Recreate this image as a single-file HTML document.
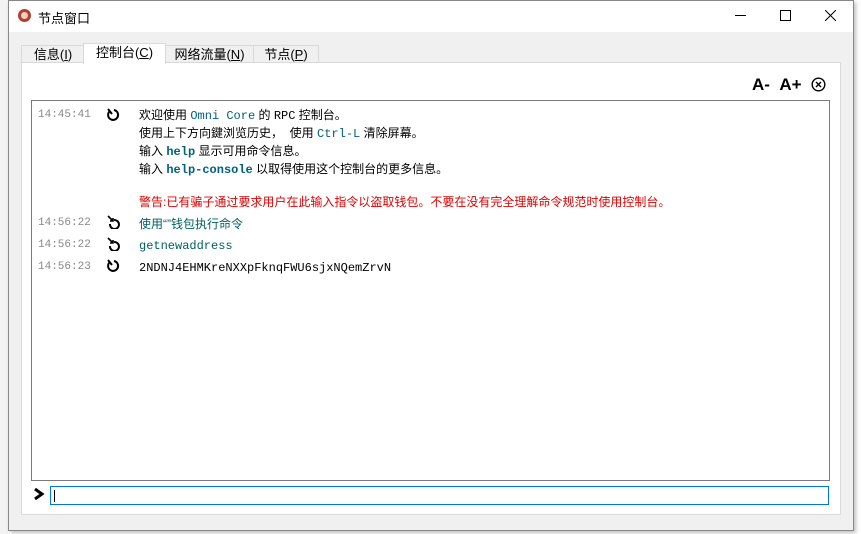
<!DOCTYPE html>
<html><head><meta charset="utf-8"><style>
body{margin:0;width:861px;height:534px;background:#fff;position:relative;overflow:hidden;font-family:"Liberation Sans","Noto Sans CJK SC",sans-serif;font-size:12px;}
.abs{position:absolute}
#bgl{left:0;top:0;width:8px;height:534px;background:#f3f3f3}
#win{left:8px;top:0;width:844px;height:529px;background:#f0f0f0;border:1px solid #888;box-shadow:2px 2px 4px rgba(0,0,0,.25)}
#title{left:0;top:0;width:844px;height:31px;background:#fff}
.tab{top:44px;height:17px;border:1px solid #d9d9d9;border-bottom:none;background:#f0f0f0;font-size:13px;line-height:17px;text-align:center;color:#000}
.tab.act{top:42px;height:20px;background:#fff;border-color:#d9d9d9;z-index:2}
#panel{left:12px;top:61px;width:818px;height:451px;background:#fff;border:1px solid #d9d9d9}
#cons{left:22px;top:99px;width:797px;height:379px;border:1px solid #7a7a7a;background:#fff}
.ts{position:absolute;left:6px;font-family:"Liberation Mono",monospace;font-size:11px;color:#888}
.ic{position:absolute;left:75px;width:14px;height:14px}
.tx{position:absolute;left:107px;font-size:12px;color:#000;white-space:nowrap}
.m{font-family:"Liberation Mono",monospace;color:#006080}
</style></head><body>
<div id="bgl" class="abs"></div>
<div id="win" class="abs">
 <div id="title" class="abs">
  <div class="abs" style="left:9px;top:8px;width:13px;height:13px;border-radius:50%;background:#b04030"><div style="margin:3px;width:7px;height:7px;border-radius:50%;background:#f0d0c0"></div></div>
  <div class="abs" style="left:29px;top:7px;font-size:13px">节点窗口</div>
  <div class="abs" style="left:726px;top:14px;width:11px;height:1px;background:#000"></div>
  <div class="abs" style="left:771px;top:9px;width:9px;height:9px;border:1px solid #000"></div>
  <svg class="abs" style="left:816px;top:9px" width="11" height="11"><path d="M0 0L11 11M11 0L0 11" stroke="#000" stroke-width="1"/></svg>
 </div>
 <div class="tab abs" style="left:12px;width:62px">信息(<u>I</u>)</div>
 <div class="tab abs act" style="left:74px;width:81px">控制台(<u>C</u>)</div>
 <div class="tab abs" style="left:156px;width:87px">网络流量(<u>N</u>)</div>
 <div class="tab abs" style="left:244px;width:64px">节点(<u>P</u>)</div>
 <div id="panel" class="abs">
  <div class="abs" style="left:730px;top:12px;font-weight:bold;font-size:17px">A- &nbsp;A+</div>
  <svg class="abs" style="left:789px;top:14px" width="15" height="15"><circle cx="7.5" cy="7.5" r="6.3" fill="none" stroke="#000" stroke-width="1.4"/><path d="M5 5L10 10M10 5L5 10" stroke="#000" stroke-width="1.4"/></svg>
 </div>
 <div id="cons" class="abs">
  <div class="ts" style="top:8px">14:45:41</div>
  <svg class="ic" style="top:7px" viewBox="0 0 14 14"><path d="M3 3A5 5 0 1 0 7 2" fill="none" stroke="#000" stroke-width="2"/><path d="M1 1L5 6" stroke="#000" stroke-width="2"/></svg>
  <div class="tx" style="top:5px">欢迎使用 <span class="m">Omni Core</span> 的 <span class="m" style="color:#000">RPC</span> 控制台。</div>
  <div class="tx" style="top:23px">使用上下方向鍵浏览历史， &nbsp;使用 <span class="m">Ctrl-L</span> 清除屏幕。</div>
  <div class="tx" style="top:41px">输入 <span class="m" style="font-weight:bold">help</span> 显示可用命令信息。</div>
  <div class="tx" style="top:59px">输入 <span class="m" style="font-weight:bold">help-console</span> 以取得使用这个控制台的更多信息。</div>
  <div class="tx" style="top:92px;color:#e00000">警告:已有骗子通过要求用户在此输入指令以盗取钱包。不要在没有完全理解命令规范时使用控制台。</div>
  <div class="ts" style="top:116px">14:56:22</div>
  <svg class="ic" style="top:114px" viewBox="0 0 14 14"><path d="M7 5A4.5 4.5 0 1 1 3 9" fill="none" stroke="#000" stroke-width="2"/><path d="M1 1L6 6M3 6H6V3" fill="none" stroke="#000" stroke-width="1.6"/></svg>
  <div class="tx" style="top:114px;color:#006060">使用“”钱包执行命令</div>
  <div class="ts" style="top:138px">14:56:22</div>
  <svg class="ic" style="top:136px" viewBox="0 0 14 14"><path d="M7 5A4.5 4.5 0 1 1 3 9" fill="none" stroke="#000" stroke-width="2"/><path d="M1 1L6 6M3 6H6V3" fill="none" stroke="#000" stroke-width="1.6"/></svg>
  <div class="tx m" style="top:138px;color:#006060">getnewaddress</div>
  <div class="ts" style="top:160px">14:56:23</div>
  <svg class="ic" style="top:158px" viewBox="0 0 14 14"><path d="M3 3A5 5 0 1 0 7 2" fill="none" stroke="#000" stroke-width="2"/><path d="M1 1L5 6" stroke="#000" stroke-width="2"/></svg>
  <div class="tx m" style="top:160px;color:#000">2NDNJ4EHMKreNXXpFknqFWU6sjxNQemZrvN</div>
 </div>
 <svg class="abs" style="left:24px;top:487px" width="12" height="12"><path d="M2 1L9 6L2 11" fill="none" stroke="#000" stroke-width="3"/></svg>
 <div class="abs" style="left:41px;top:485px;width:777px;height:17px;border:1px solid #0078d7;background:#fff"><div style="margin:3px 0 0 3px;width:1px;height:12px;background:#000"></div></div>
</div>
</body></html>
